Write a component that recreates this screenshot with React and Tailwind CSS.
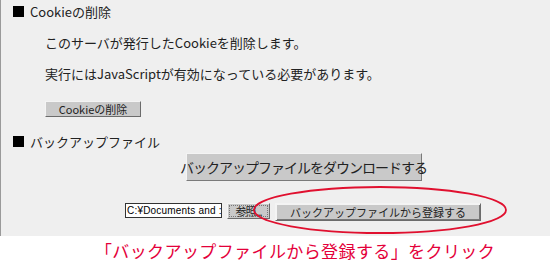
const jp = { fontFamily: '"Noto Sans CJK JP", "Liberation Sans", sans-serif' };

const Heading = ({ children, className = "" }) => (
  <div className={`flex items-center h-[20px] ${className}`}>
    <span className="w-[11px] h-[11px] bg-black ml-[12px] mr-[6px]" />
    <span className="text-[13px] text-[#222] leading-none">{children}</span>
  </div>
);

const bevel =
  "bg-[#c9c9c9] border border-t-[#f4f4f4] border-l-[#f4f4f4] border-r-[#6b6b6b] border-b-[#6b6b6b] text-[#222] leading-none flex items-center justify-center whitespace-nowrap";

export default function App() {
  return (
    <div className="w-[550px] h-[264px] bg-white relative overflow-hidden" style={jp}>
      <div className="h-[236px] bg-[#efefef] border-l border-[#9a9a9a] pt-[1px]">
        <Heading>Cookieの削除</Heading>

        <div className="pl-[44px] pt-[11px] text-[13px] text-[#222] leading-none">
          <p className="h-[21px] flex items-center">このサーバが発行したCookieを削除します。</p>
          <p className="h-[21px] flex items-center mt-[10px]">
            実行にはJavaScriptが有効になっている必要があります。
          </p>
          <button className={`${bevel} mt-[17px] w-[96px] h-[16px] text-[11px]`}>
            Cookieの削除
          </button>
        </div>

        <Heading className="mt-[14px]">バックアップファイル</Heading>

        <div className="flex justify-center pl-[56px] mt-[2px]">
          <button className={`${bevel} w-[236px] h-[28px] text-[14px] tracking-[-1px] border-r-[#7a7a7a] border-b-[#7a7a7a]`}>
            バックアップファイルをダウンロードする
          </button>
        </div>

        <div className="flex items-start pl-[124px] mt-[22px]">
          <div
            className="w-[97px] h-[15px] bg-white border border-[#333] leading-none flex items-center px-[1px] text-black whitespace-nowrap overflow-hidden"
            style={{ fontFamily: '"Liberation Sans", "Noto Sans CJK JP", sans-serif', fontSize: "10px", letterSpacing: "0.2px" }}
          >
            C:¥Documents and :
          </div>
          <button className={`${bevel} ml-[5px] w-[43px] h-[16px] text-[11px] tracking-[-1px] outline outline-1 outline-dotted outline-[#777] -outline-offset-[3px]`}>
            参照...
          </button>
          <button className={`${bevel} ml-[5px] w-[206px] h-[18px] text-[11px] border-[#222] shadow-[inset_1px_1px_0_#f4f4f4,inset_-1px_-1px_0_#777]`}>
            バックアップファイルから登録する
          </button>
        </div>
      </div>

      <div className="h-[28px] flex items-center justify-center pl-[40px] text-[17px] text-[#e4003a] tracking-[0.4px] leading-none">
        「バックアップファイルから登録する」をクリック
      </div>

      <svg className="absolute left-0 top-0 pointer-events-none" width="550" height="264">
        <ellipse cx="380" cy="210" rx="126" ry="23" fill="none" stroke="#e0102f" strokeWidth="1.8" />
      </svg>
    </div>
  );
}
